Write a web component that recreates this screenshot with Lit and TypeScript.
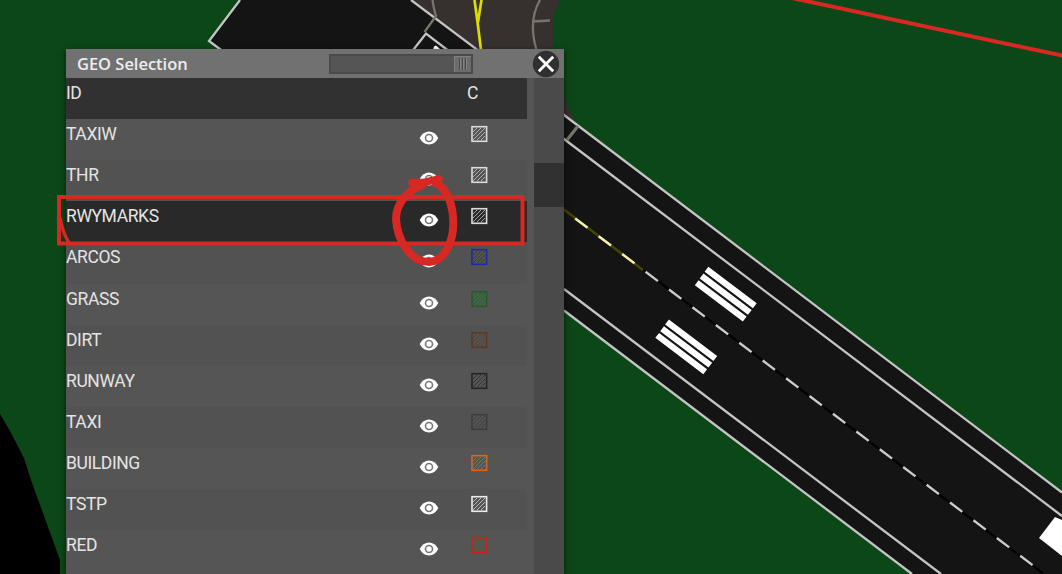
import { LitElement, html, svg, css } from "lit";
import { customElement } from "lit/decorators.js";

const LAYERS = [
  { id: "TAXIW", color: "#dcdcdc" },
  { id: "THR", color: "#dcdcdc" },
  { id: "RWYMARKS", color: "#dcdcdc", selected: true },
  { id: "ARCOS", color: "#2424b4" },
  { id: "GRASS", color: "#245c2c", fill: "#46604a" },
  { id: "DIRT", color: "#5c3a24" },
  { id: "RUNWAY", color: "#262427" },
  { id: "TAXI", color: "#403c3d" },
  { id: "BUILDING", color: "#d06a24" },
  { id: "TSTP", color: "#ececec" },
  { id: "RED", color: "#d01c1c" },
];

@customElement("geo-map")
class GeoMap extends LitElement {
  static styles = css`
    :host { display: block; width: 1062px; height: 574px; }
    svg { display: block; }
  `;
  render() {
    return html`<svg width="1062" height="574" viewBox="0 0 1062 574">
      <rect width="1062" height="574" fill="#0c4718" />
      <path d="M0 414L10 431L24 458L31 480L60 560V574H0Z" fill="#000" />
      <path d="M410 0H560L554 15L553 28L554 60Q560 95 576 122L540 130L440 60Z" fill="#36302f" />
      <path d="M240 0L209 41L350 146.500L564 310L912 574H1062V492L564 115L411 0Z" fill="#141414" />
      <g fill="none" stroke="#c4c4c4" stroke-width="2.300">
        <path d="M240 0L209 41L240 64" />
        <path d="M411 0L564 115L1062 492.500" />
        <path d="M410 54L426 33.500L564 139L1062 516" />
        <path d="M564 289L941 574M564 310.500L912 574" />
      </g>
      <path d="M432.500 0Q434 10 436 16L424.500 32M540 0C533 12 530 28 536.500 50M533 21.500L550 20.500" fill="none" stroke="#77756b" stroke-width="2.300" />
      <path d="M578 126L567 140" stroke="#77756b" stroke-width="3.200" />
      <path d="M474.500 0L477.500 22L481 50M481.500 0L478 22" fill="none" stroke="#dcdc00" stroke-width="2.700" />
      <path d="M433 50L434 46.500L436 45.500L440 49Z" fill="#fff" />
      <path d="M564 209.500L1043 573.500" stroke="#030303" stroke-width="2.400" />
      <path d="M564 209.500L643 270" stroke="#454300" stroke-width="2.800" />
      <path d="M575.200 218.500L636 264.500" stroke="#f2f0b4" stroke-width="2.500" stroke-dasharray="15.500 13.940" />
      <path d="M645.600 271.800L1034 566.200" stroke="#ccc" stroke-width="2.400" stroke-dasharray="15.500 13.880" />
      ${[[0, 0], [-39.5, 52.7]].map(
        ([x, y]) => svg`<g transform="translate(${x} ${y})" stroke="#fff" stroke-width="6.200">
          <path d="M706.500 269.300L754.800 305.800M701.600 276L749.800 312.400M696.700 282.700L744.700 319" />
        </g>`
      )}
      <path d="M1055 517L1039 538L1062 556V520Z" fill="#fff" />
      <path d="M792 -2L1064 56" stroke="#d82824" stroke-width="4" />
    </svg>`;
  }
}

@customElement("geo-panel")
class GeoPanel extends LitElement {
  static styles = css`
    :host { display: flex; flex-direction: column; width: 498px; height: 525px; background: #555; box-shadow: 0 2px 6px rgba(0,0,0,.6); color: #e4e4e4; font: 17.5px Roboto, sans-serif; }
    .bar { height: 29px; background: #717171; display: flex; align-items: center; padding-left: 11px; box-sizing: border-box; }
    .title { width: 252px; font: 600 16.5px/28px "Open Sans", sans-serif; letter-spacing: -.03px; color: #ededed; }
    .slider { width: 144px; height: 20px; box-sizing: border-box; border: 2px solid #4a4a4a; background: #555; display: flex; justify-content: flex-end; }
    .thumb { width: 17px; height: 16px; background: #6c6c6c; box-shadow: inset 1px 1px #808080; display: flex; justify-content: center; align-items: center; gap: 2px; }
    .thumb i { width: 1px; height: 12px; background: #484848; box-shadow: 1px 0 #868686; }
    .close { margin-left: 59px; display: block; }
    .body { display: flex; flex: 1; min-height: 0; overflow: hidden; }
    .list { width: 461px; }
    .row { height: 41.12px; display: grid; grid-template-columns: 352px 49px 1fr; background: #555; }
    .row.alt { background: #525252; }
    .row.head { background: #313131; }
    .row.selected { background: #292929; }
    .id { line-height: 20px; padding-top: 5px; letter-spacing: -.4px; }
    .c { line-height: 20px; padding-top: 5px; }
    .eye { display: block; padding-top: 12px; }
    .sw { display: block; padding: 6px 0 0 3px; }
    .track { margin-left: 7px; width: 30px; background: #4a4a4a; padding-top: 85px; }
    .knob { height: 44px; background: #313131; }
  `;
  render() {
    return html`
      <div class="bar">
        <div class="title">GEO Selection</div>
        <div class="slider"><div class="thumb"><i></i><i></i><i></i></div></div>
        <svg class="close" width="28" height="28" viewBox="0 0 28 28"><circle cx="14" cy="14" r="13.200" fill="#303030" /><path d="M6.800 6.800L21.200 21.200M21.200 6.800L6.800 21.200" stroke="#fff" stroke-width="2.800" /></svg>
      </div>
      <div class="body">
        <div class="list">
          <div class="row head"><div class="id">ID</div><div></div><div class="c">C</div></div>
          ${LAYERS.map(
            (l, i) => html`<div class="row ${l.selected ? "selected" : i % 2 ? "alt" : ""}">
              <div class="id">${l.id}</div>
              <svg class="eye" width="22" height="14" viewBox="0 0 22 14"><path d="M1.700 7Q5 .5 11 .5T20.300 7Q17 13.500 11 13.500T1.700 7Z" fill="#fff" /><circle cx="11" cy="7" r="3.500" fill="none" stroke="#777" stroke-width="1.600" /></svg>
              <svg class="sw" width="18" height="18" viewBox="0 0 18 18" fill="none" stroke=${l.color}><rect x="2" y="1.700" width="14.600" height="14.600" fill=${l.fill ?? "none"} stroke-width="1.600" /><path d="M3 7L7 3M3 11L11 3M3 15L15 3M7 15L15 7M11 15L15 11" stroke-width="1" stroke-opacity=".7" /></svg>
            </div>`
          )}
        </div>
        <div class="track"><div class="knob"></div></div>
      </div>`;
  }
}

@customElement("app-root")
class AppRoot extends LitElement {
  static styles = css`
    :host { display: block; position: relative; width: 1062px; height: 574px; overflow: hidden; }
    .panel { position: absolute; left: 66px; top: 49px; }
    .marks { position: absolute; left: 0; top: 0; }
  `;
  render() {
    return html`<geo-map></geo-map>
      <geo-panel class="panel"></geo-panel>
      <svg class="marks" width="1062" height="574" viewBox="0 0 1062 574" fill="none" stroke="#d82824">
        <rect x="59" y="197" width="463.500" height="46.500" stroke-width="4" />
        <path d="M60 218Q64 238 71 245" stroke-width="3.500" />
        <path d="M412 182.500Q420 183 426 182L439 179" stroke-width="7.500" stroke-linecap="round" />
        <path d="M425 184C406 190 396 205 396 219C397 239 410 262 429 262C446 261 455 238 453 217C452 201 445 186 433 182" stroke-width="8" />
      </svg>`;
  }
}
